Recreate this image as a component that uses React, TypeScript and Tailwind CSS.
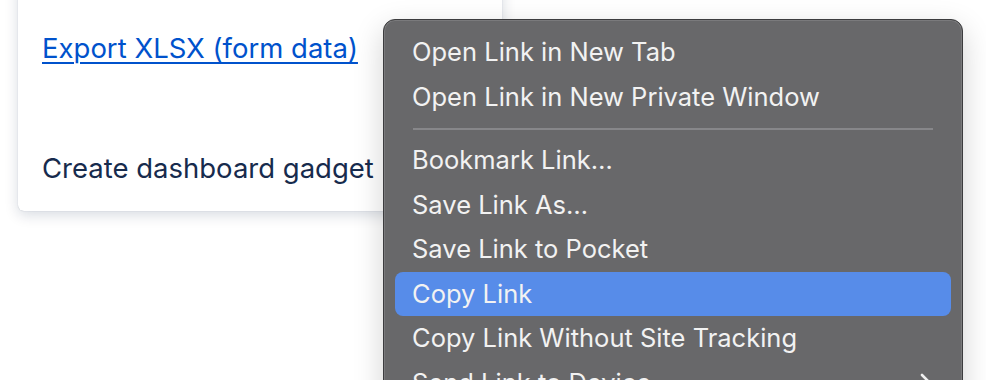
import React from 'react'

const items1 = ['Open Link in New Tab', 'Open Link in New Private Window']
const items2 = [
    'Bookmark Link…',
    'Save Link As…',
    'Save Link to Pocket',
    'Copy Link',
    'Copy Link Without Site Tracking',
]

const MenuItem = ({ label, active, sub }: { label: string; active?: boolean; sub?: boolean }) => {
    return (
        <div
            className={
                active
                    ? 'mx-[11px] flex h-[44.5px] items-center justify-between rounded-[8px] bg-[#578ce9] pl-[17px] pr-[18px]'
                    : 'mx-[11px] flex h-[44.5px] items-center justify-between rounded-[8px] pl-[17px] pr-[18px]'
            }
        >
            <span>{label}</span>
            {sub && (
                <svg width="14" height="22" viewBox="0 0 14 22" fill="none">
                    <path d="M3 3 L11 11 L3 19" stroke="#f0f0f0" strokeWidth="2.6" strokeLinecap="round" strokeLinejoin="round" />
                </svg>
            )}
        </div>
    )
}

const App = () => {
    return (
        <div className="relative h-[380px] w-[986px] overflow-hidden bg-white font-['Inter','Liberation_Sans',sans-serif]">
            {/* card behind the menu */}
            <div className="ml-[18px] mt-[-20px] flex h-[231px] w-[484px] flex-col rounded-[6px] bg-white px-[24px] pt-[48px] shadow-[0_4px_14px_rgba(9,30,66,0.16),0_0_1px_rgba(9,30,66,0.3)]">
                <a href="#" className="w-fit text-[27.5px] leading-[40px] text-[#0052cc] underline decoration-[1.5px] underline-offset-[4px]">
                    Export XLSX (form data)
                </a>
                <div className="mt-[80px] text-[27.5px] leading-[40px] text-[#172b4d]">Create dashboard gadget</div>
            </div>

            {/* context menu */}
            <div className="absolute left-[383px] top-[19px] w-[580px] rounded-[12px] border border-[#3c3c3e] bg-[#68686a] pt-[10px] pb-[10px] text-[25.5px] text-[#f2f2f2] shadow-[0_10px_30px_rgba(0,0,0,0.18),inset_0_0_0_1px_rgba(255,255,255,0.12)]">
                {items1.map((label) => (
                    <MenuItem key={label} label={label} />
                ))}
                <div className="flex h-[19px] items-center px-[29px]">
                    <div className="h-[2px] w-full bg-[#87878a]" />
                </div>
                {items2.map((label) => (
                    <MenuItem key={label} label={label} active={label === 'Copy Link'} />
                ))}
                <MenuItem label="Send Link to Device" sub />
            </div>
        </div>
    )
}

export default App
